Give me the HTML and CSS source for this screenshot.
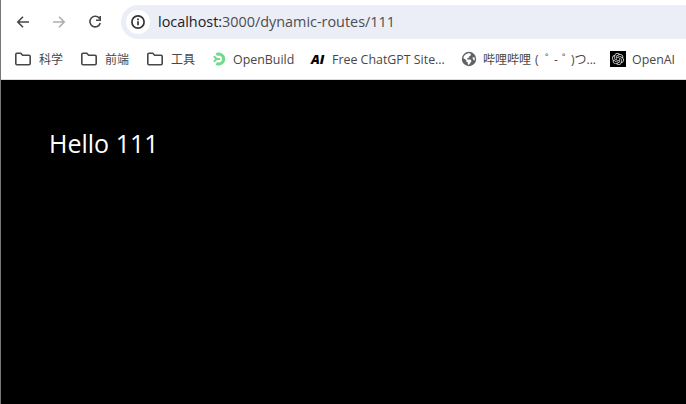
FILE: index.html
```html
<!DOCTYPE html>
<html lang="zh-CN">
<head>
<meta charset="utf-8">
<title>localhost:3000/dynamic-routes/111</title>
<link rel="stylesheet" href="styles.css">
</head>
<body>
<div class="window">
  <header class="chrome">
    <nav class="toolbar">
      <svg class="nav-icon" viewBox="0 0 16 16"><path d="M14 8H3M8 2.8 2.8 8 8 13.2"/></svg>
      <svg class="nav-icon disabled" viewBox="0 0 16 16"><path d="M2 8h11M8 2.8 13.2 8 8 13.2"/></svg>
      <svg class="nav-icon" viewBox="0 0 16 16"><path d="M12.6 4.6A5.3 5.3 0 1 0 13.3 9M13.2 2v4.2H9"/></svg>
      <div class="address">
        <span class="site-info">
          <svg viewBox="0 0 16 16"><circle cx="8" cy="8" r="6.1"/><path d="M8 7.3v3.9M8 4.6v1.6"/></svg>
        </span>
        <span class="url"><span class="host">localhost:</span>3000/dynamic-routes/111</span>
      </div>
    </nav>
    <div class="bookmarks">
      <div class="bookmark folder"><svg viewBox="0 0 18 16"><path d="M1.8 3.4Q1.8 2.3 2.9 2.3H6.8L8.6 4.2H15Q16.2 4.2 16.2 5.4V12.5Q16.2 13.7 15 13.7H3Q1.8 13.7 1.8 12.5Z"/></svg><span>科学</span></div>
      <div class="bookmark folder"><svg viewBox="0 0 18 16"><path d="M1.8 3.4Q1.8 2.3 2.9 2.3H6.8L8.6 4.2H15Q16.2 4.2 16.2 5.4V12.5Q16.2 13.7 15 13.7H3Q1.8 13.7 1.8 12.5Z"/></svg><span>前端</span></div>
      <div class="bookmark folder"><svg viewBox="0 0 18 16"><path d="M1.8 3.4Q1.8 2.3 2.9 2.3H6.8L8.6 4.2H15Q16.2 4.2 16.2 5.4V12.5Q16.2 13.7 15 13.7H3Q1.8 13.7 1.8 12.5Z"/></svg><span>工具</span></div>
      <div class="bookmark build"><svg viewBox="0 0 16 16"><path class="ring" d="M4.3 3.6A5 5 0 1 1 4.3 12.4"/><path class="arrow" d="M1.8 5.2 4.6 8 1.8 10.8M4 8h4"/></svg><span>OpenBuild</span></div>
      <div class="bookmark chat"><b class="ai">AI</b><span>Free ChatGPT Site...</span></div>
      <div class="bookmark bili"><svg viewBox="0 0 16 16"><circle cx="8" cy="8" r="7.2"/><path d="M9.3 2.3 10 4.2 8.2 5.2V6.6L6.3 7.2 6.2 8.4H9.6L10.5 10 9.3 12 8 13.7 6.8 13.5V11.5L5.2 10.4V8.9L2.4 7.2C2.7 4.4 5.4 1.8 9.3 2.3ZM11.4 6.2 13.7 6.5 13.8 9.4 12.2 8.8Z"/></svg><span>哔哩哔哩<i class="open">(</i><i class="mark">゜</i><i class="dash">-</i><i class="mark">゜</i>)つ...</span></div>
      <div class="bookmark openai"><svg viewBox="-4 -4 32 32"><path class="tile" d="M-4-4h32v32H-4z"/><path class="knot" d="M22.28 9.82a5.98 5.98 0 0 0-.52-4.91 6.05 6.05 0 0 0-6.51-2.9A6.07 6.07 0 0 0 4.98 4.18a5.98 5.98 0 0 0-4 2.9 6.05 6.05 0 0 0 .74 7.1 5.98 5.98 0 0 0 .51 4.91 6.05 6.05 0 0 0 6.52 2.9A5.98 5.98 0 0 0 13.26 24a6.06 6.06 0 0 0 5.77-4.21 5.99 5.99 0 0 0 4-2.9 6.06 6.06 0 0 0-.75-7.07zm-9.02 12.61a4.48 4.48 0 0 1-2.88-1.04l.14-.08 4.78-2.76a.79.79 0 0 0 .39-.68v-6.74l2.02 1.17a.07.07 0 0 1 .04.05v5.58a4.5 4.5 0 0 1-4.49 4.5zM3.6 18.3a4.47 4.47 0 0 1-.54-3.01l.14.09 4.78 2.76a.77.77 0 0 0 .78 0l5.85-3.37v2.33a.08.08 0 0 1-.03.06L9.74 19.95A4.5 4.5 0 0 1 3.6 18.3zM2.34 7.9a4.49 4.49 0 0 1 2.37-1.98v5.68a.77.77 0 0 0 .38.68l5.82 3.35-2.02 1.17a.08.08 0 0 1-.07 0L3.99 14A4.5 4.5 0 0 1 2.34 7.87zm16.6 3.85-5.84-3.38L15.12 7.2a.08.08 0 0 1 .07 0l4.83 2.79a4.5 4.5 0 0 1-.68 8.1v-5.67a.79.79 0 0 0-.4-.67zm2.01-3.02-.14-.09-4.78-2.78a.78.78 0 0 0-.78 0L9.41 9.23V6.9a.07.07 0 0 1 .03-.06l4.83-2.79a4.5 4.5 0 0 1 6.68 4.66zM8.31 12.86l-2.02-1.16a.08.08 0 0 1-.04-.06V6.07a4.5 4.5 0 0 1 7.38-3.45l-.14.08-4.78 2.76a.79.79 0 0 0-.4.68zm1.09-2.36L12 9l2.61 1.5v3L12 15l-2.6-1.5z"/></svg><span>OpenAI</span></div>
    </div>
  </header>
  <main class="page"><h1>Hello 111</h1></main>
</div>
</body>
</html>
```
FILE: styles.css
```css
* { box-sizing: border-box; }
body {
  margin: 0;
  overflow: hidden;
  font-family: "Open Sans", "Noto Sans CJK SC", sans-serif;
}
.window {
  height: 404px;
  display: flex;
  flex-direction: column;
  border-left: 1px solid #777;
  background: #000;
}
.chrome {
  height: 80px;
  flex: none;
  background: #fff;
  border-bottom: 1px solid #dcdcdc;
}
.toolbar {
  height: 39px;
  padding: 5px 0 0 14px;
  display: flex;
  align-items: center;
  gap: 20px;
}
.nav-icon {
  width: 16px;
  height: 16px;
  flex: none;
  fill: none;
  stroke: #464748;
  stroke-width: 1.6;
}
.disabled { stroke: #adadad; }
.address {
  flex: 1;
  height: 34px;
  margin-left: -2px;
  padding-left: 5px;
  display: flex;
  align-items: center;
  gap: 8px;
  background: #ebeef7;
  border-radius: 17px 0 0 17px;
}
.site-info {
  width: 24px;
  height: 24px;
  display: flex;
  align-items: center;
  justify-content: center;
  background: #fff;
  border-radius: 50%;
}
.site-info svg {
  width: 16px;
  height: 16px;
  fill: none;
  stroke: #333;
  stroke-width: 1.7;
}
.url {
  font-size: 14.4px;
  line-height: 20px;
  color: #4b4d52;
  white-space: nowrap;
}
.host { color: #202124; }
.bookmarks {
  height: 40px;
  padding-left: 13px;
  display: flex;
  align-items: center;
}
.bookmark {
  flex: none;
  display: flex;
  align-items: center;
  white-space: nowrap;
  font-size: 12.4px;
  line-height: 18px;
  color: #474747;
}
.bookmark svg {
  width: 16px;
  height: 16px;
  flex: none;
}
.bookmark span { padding-top: 2px; }
.folder { width: 66px; gap: 7px; font-size: 12px; }
.folder svg {
  width: 18px;
  fill: none;
  stroke: #474747;
  stroke-width: 1.6;
}
.build { width: 99px; gap: 5px; }
.build svg { fill: none; stroke: #70dc8b; }
.ring { stroke-width: 3; }
.arrow { stroke-width: 2; }
.chat { width: 150px; }
.ai {
  width: 21px;
  font: italic 800 13px/18px "Open Sans", sans-serif;
  color: #000;
}
.bili { width: 149px; gap: 6px; }
.bili circle { fill: #5f6368; }
.bili path { fill: #fff; }
.bili span { font-size: 12px; }
.bili i { display: inline-block; font-style: normal; }
.open { width: 10px; padding-left: 4px; }
.mark { width: 13px; padding-left: 4px; }
.dash { width: 4px; }
.openai { gap: 6px; }
.tile { fill: #000; }
.knot { fill: #ddd; }
.page { padding: 45px 48px; }
.page h1 {
  margin: 0;
  font-size: 25px;
  font-weight: 400;
  line-height: 36px;
  color: #fff;
  white-space: nowrap;
}
```
